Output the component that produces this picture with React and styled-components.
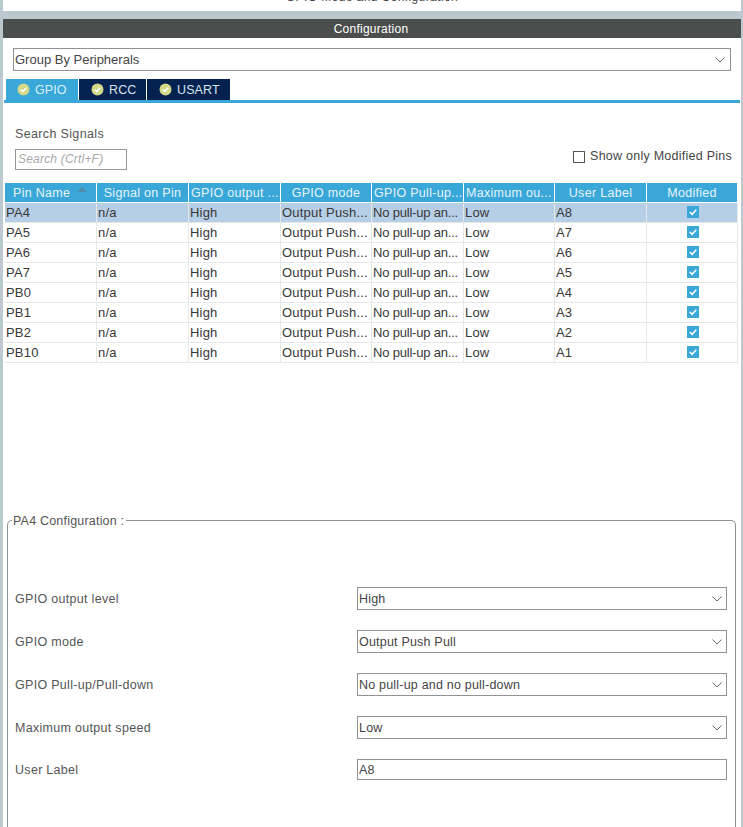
import React from 'react';
import styled,{createGlobalStyle} from 'styled-components';

const Global = createGlobalStyle`
html,body{margin:0;padding:0;background:#bcc8d0;}
body{font-family:"Liberation Sans",Arial,sans-serif;font-size:13px;color:#3c3c3c;}
`
const Page = styled.div`
width:743px;
height:827px;
overflow:hidden;
box-sizing:border-box;
padding:0 2px 0 3px;
background:#bcc8d0;
display:flex;
flex-direction:column;
`
const TopPanel = styled.div`
height:11px;
flex:none;
background:#fff;
display:flex;
align-items:flex-end;
justify-content:center;
padding-bottom:7px;
box-sizing:border-box;
font-size:12px;
line-height:14px;
letter-spacing:.4px;
color:#444;
`
const Main = styled.div`
margin-top:8px;
flex:1;
background:#fff;
display:flex;
flex-direction:column;
min-height:0;
`
const Title = styled.div`
height:19px;
padding-right:2px;
background:#4c4e4e;
color:#fff;
text-align:center;
font-size:12px;
line-height:20px;
letter-spacing:.25px;
`
const Combo = styled.div`
box-sizing:border-box;
display:flex;
align-items:center;
justify-content:space-between;
height:23px;
border:1px solid #8f9393;
padding:0 4px 0 1px;
background:#fff;
font-size:12.5px;
letter-spacing:.2px;
color:#444;
`
const GroupCombo = styled(Combo)`
margin:10px 10px 0 10px;
padding-right:5px;
font-size:13px;
letter-spacing:0;
`
const Tabs = styled.div`
display:flex;
margin:8px 1px 0 1px;
padding-left:2px;
height:21px;
border-bottom:3px solid #39a7d8;
`
const Tab = styled.div`
display:flex;
align-items:center;
gap:5px;
box-sizing:border-box;
height:21px;
width:${p=>p.$w}px;
padding-left:${p=>p.$left}px;
margin-right:1px;
background:${p=>p.$active?'#39a7d8':'#04224f'};
color:${p=>p.$active?'#d8eef8':'#d9e2ee'};
font-size:12.5px;
letter-spacing:.1px;
`
const SearchArea = styled.div`
display:flex;
justify-content:space-between;
align-items:flex-end;
margin:21px 9px 0 12px;
height:46px;
`
const SearchLeft = styled.div`
display:flex;
flex-direction:column;
gap:7px;
`
const SearchTitle = styled.div`
font-size:12.5px;
line-height:15px;
letter-spacing:.35px;
color:#555;
`
const SearchBox = styled.div`
box-sizing:border-box;
width:112px;
height:21px;
border:1px solid #999;
padding-left:2px;
font-size:12px;
line-height:19px;
font-style:italic;
letter-spacing:.2px;
color:#a8a8a8;
`
const ModifiedOnly = styled.label`
display:flex;
align-items:center;
gap:5px;
margin-bottom:6px;
font-size:12.5px;
line-height:15px;
letter-spacing:.25px;
color:#444;
`
const EmptyBox = styled.span`
width:10px;
height:10px;
border:1px solid #555;
background:#fff;
`
const Table = styled.div`
margin:13px 0 0 2px;
width:733px;
display:grid;
grid-template-columns:92px 92px 92px 91px 92px 91px 92px 91px;
`
const Head = styled.div`
box-sizing:border-box;
height:20px;
background:#39a7d8;
border-right:1px solid #fff;
border-bottom:1px solid #fff;
color:#e6f4fb;
font-size:12.5px;
line-height:19px;
letter-spacing:.3px;
padding-top:1px;
padding-left:${p=>p.$pad||0}px;
white-space:nowrap;
overflow:hidden;
display:flex;
align-items:center;
justify-content:${p=>p.$pad?'flex-start':'center'};
`
const SortMark = styled.span`
flex:none;
margin-left:7px;
margin-top:-8px;
width:0;
height:0;
border-left:5px solid transparent;
border-right:5px solid transparent;
border-bottom:5px solid #4e8cab;
`
const Cell = styled.div`
box-sizing:border-box;
height:20px;
background:${p=>p.$selected?'#b6cfe6':'#fff'};
border-right:1px solid #e6e8e8;
border-bottom:1px solid #e6e8e8;
font-size:13px;
line-height:19px;
letter-spacing:${p=>p.$tight?'-.2px':'.2px'};
padding-left:1px;
padding-bottom:${p=>p.$center?2:0}px;
color:#383838;
white-space:nowrap;
overflow:hidden;
display:flex;
align-items:center;
justify-content:${p=>p.$center?'center':'flex-start'};
`
const CheckBox = styled.span`
width:12px;
height:12px;
background:#39a7d8;
display:flex;
align-items:center;
justify-content:center;
`
const Fieldset = styled.div`
position:relative;
margin:157px 0 0 4px;
width:729px;
flex:1;
box-sizing:border-box;
border:1px solid #8f9393;
border-bottom:none;
border-radius:5px 5px 0 0;
padding:56px 9px 0 7px;
`
const Legend = styled.div`
position:absolute;
top:-7px;
left:4px;
padding:0 2px 0 1px;
background:#fff;
font-size:12.5px;
line-height:15px;
letter-spacing:.2px;
color:#555;
`
const FormRow = styled.div`
display:grid;
grid-template-columns:342px 370px;
align-items:center;
height:${p=>p.$h||43}px;
font-size:12.5px;
letter-spacing:.3px;
color:#555;
`
const TextField = styled(Combo)`
height:21px;
`

const Chevron = () => (
  <svg width="10" height="6" viewBox="0 0 10 6" fill="none" stroke="#666" strokeWidth="1">
    <path d="M.5.5l4.500 4.500 4.500-4.500"/>
  </svg>
)

const TabIcon = () => (
  <svg width="13" height="13" viewBox="0 0 13 13">
    <circle cx="6.5" cy="6.5" r="6" fill="#d3d987"/>
    <path d="M3.800 6.600l2 2 3.500-3.800" fill="none" stroke="#fff" strokeWidth="1.500"/>
  </svg>
)

const Tick = () => (
  <svg width="10" height="10" viewBox="0 0 10 10" fill="none" stroke="#fff" strokeWidth="1.500">
    <path d="M1.800 5l2.300 2.300 4.200-4.600"/>
  </svg>
)

const columns=['Signal on Pin','GPIO output ...','GPIO mode','GPIO Pull-up...','Maximum ou...','User Label','Modified']
const leftColumns=['GPIO output ...','GPIO Pull-up...','Maximum ou...']
const rows=[['PA4','A8'],['PA5','A7'],['PA6','A6'],['PA7','A5'],['PB0','A4'],['PB1','A3'],['PB2','A2'],['PB10','A1']]
const tabs=[{name:'GPIO',active:true,left:11,w:72},{name:'RCC',left:12,w:67},{name:'USART',left:12,w:83}]

function App() {
    return(<Page>
        <Global/>
        <TopPanel>GPIO Mode and Configuration</TopPanel>
        <Main>
            <Title>Configuration</Title>
            <GroupCombo>Group By Peripherals<Chevron/></GroupCombo>
            <Tabs>
                {tabs.map(t=><Tab key={t.name} $active={t.active} $left={t.left} $w={t.w}><TabIcon/>{t.name}</Tab>)}
            </Tabs>
            <SearchArea>
                <SearchLeft>
                    <SearchTitle>Search Signals</SearchTitle>
                    <SearchBox>Search (Crtl+F)</SearchBox>
                </SearchLeft>
                <ModifiedOnly><EmptyBox/>Show only Modified Pins</ModifiedOnly>
            </SearchArea>
            <Table>
                <Head $pad={8}>Pin Name<SortMark/></Head>
                {columns.map(c=><Head key={c} $pad={leftColumns.includes(c)?2:0}>{c}</Head>)}
                {rows.map((r,i)=><React.Fragment key={r[0]}>
                    <Cell $selected={i===0}>{r[0]}</Cell>
                    <Cell $selected={i===0}>n/a</Cell>
                    <Cell $selected={i===0}>High</Cell>
                    <Cell $selected={i===0}>Output Push...</Cell>
                    <Cell $selected={i===0} $tight>No pull-up an...</Cell>
                    <Cell $selected={i===0}>Low</Cell>
                    <Cell $selected={i===0}>{r[1]}</Cell>
                    <Cell $selected={i===0} $center><CheckBox><Tick/></CheckBox></Cell>
                </React.Fragment>)}
            </Table>
            <Fieldset>
                <Legend>PA4 Configuration :</Legend>
                <FormRow>GPIO output level<Combo>High<Chevron/></Combo></FormRow>
                <FormRow>GPIO mode<Combo>Output Push Pull<Chevron/></Combo></FormRow>
                <FormRow>GPIO Pull-up/Pull-down<Combo>No pull-up and no pull-down<Chevron/></Combo></FormRow>
                <FormRow>Maximum output speed<Combo>Low<Chevron/></Combo></FormRow>
                <FormRow $h={41}>User Label<TextField>A8</TextField></FormRow>
            </Fieldset>
        </Main>
    </Page>)
}
export default App
